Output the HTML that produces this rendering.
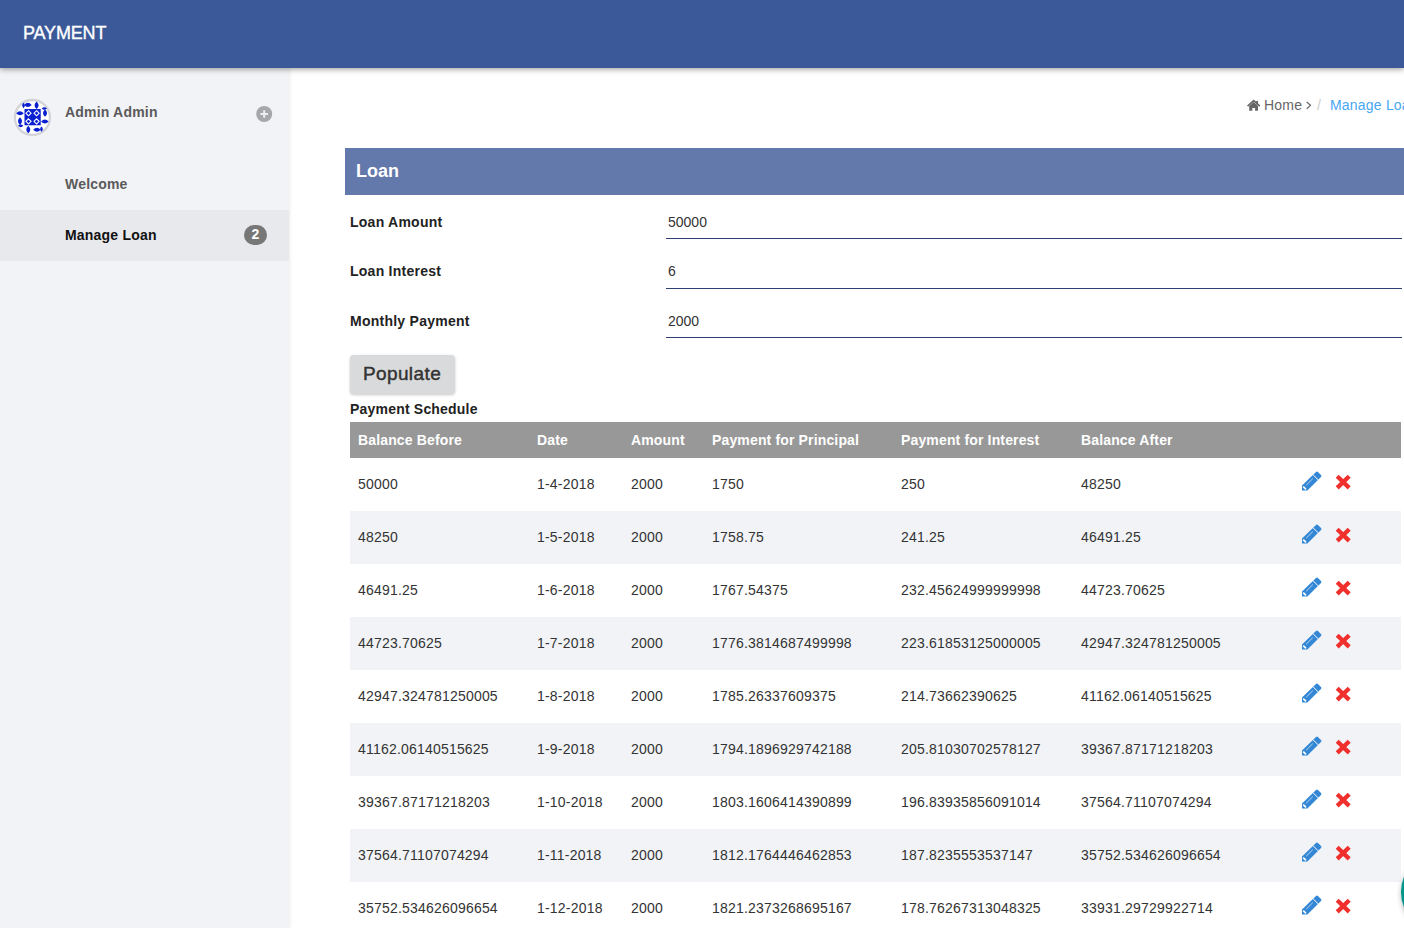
<!DOCTYPE html>
<html><head><meta charset="utf-8">
<style>
*{box-sizing:border-box;margin:0;padding:0}
html,body{width:1404px;height:928px;overflow:hidden;background:#fff;font-family:"Liberation Sans",sans-serif;color:#333}
#top{position:absolute;left:0;top:0;width:1404px;height:68px;background:#3b5998;z-index:5;box-shadow:0 1px 6px rgba(0,0,0,.42)}
#top .brand{position:absolute;left:23px;top:23px;font-size:18px;color:#fff;line-height:20px;letter-spacing:-0.15px;-webkit-text-stroke:0.35px #fff}
#side{position:absolute;left:0;top:68px;width:289px;height:860px;background:#f2f3f7;box-shadow:1px 0 3px rgba(0,0,0,.08)}
.avatar{position:absolute;left:14px;top:31px;width:37px;height:37px;border-radius:50%;background:#fff;border:2px solid #d4d5d8;overflow:hidden}
.uname{position:absolute;left:65px;top:36px;font-size:14px;font-weight:bold;color:#5a5a5a;letter-spacing:0.2px}
.plus{position:absolute;left:256px;top:38px;width:16px;height:16px;border-radius:50%;background:#a8a9ab}
.menu1{position:absolute;left:65px;top:108px;font-size:14px;font-weight:bold;color:#5a5a5a;letter-spacing:0.2px}
.active{position:absolute;left:0;top:142px;width:289px;height:51px;background:#e8e9ed}
.menu2{position:absolute;left:65px;top:159px;font-size:14px;font-weight:bold;color:#111;letter-spacing:0.2px}
.badge{position:absolute;left:244px;top:157px;width:23px;height:20px;border-radius:10px;background:#777;color:#fff;font-size:14px;font-weight:bold;text-align:center;line-height:18px}
.crumb{position:absolute;top:97px;font-size:14px;color:#666;white-space:nowrap;letter-spacing:0.2px}
.crumb .sep{color:#ccc;padding:0 8px 0 4px}
.crumb a{color:#4aa3df}
#panelhead{position:absolute;left:345px;top:148px;width:1059px;height:47px;background:#6378ab}
#panelhead span{position:absolute;left:11px;top:13px;font-size:18px;font-weight:bold;color:#fff;line-height:20px}
.lbl{position:absolute;left:350px;font-size:14px;font-weight:bold;color:#222;letter-spacing:0.25px}
.val{position:absolute;left:668px;font-size:14px;color:#333}
.line{position:absolute;left:666px;width:736px;height:1px;background:#2e4172}
.btn{position:absolute;left:350px;top:355px;width:105px;height:39px;background:#d9dadb;border-radius:4px;box-shadow:0 1px 3px rgba(0,0,0,.22);font-size:19px;font-weight:normal;-webkit-text-stroke:0.45px #333;color:#333;text-align:center;line-height:38px;letter-spacing:0.4px;text-indent:-1px}
.sched{position:absolute;left:350px;top:401px;font-size:14px;font-weight:bold;color:#222;letter-spacing:0.2px}
table{position:absolute;left:350px;top:422px;width:1051px;border-collapse:collapse;font-size:14px}
th{background:#989898;color:#fff;text-align:left;height:36px;padding:0 8px;font-weight:bold;letter-spacing:0.15px}
td{height:53px;padding:0 8px 2px;color:#333;letter-spacing:0.2px}
tr:nth-child(even) td{background:#f2f3f7}
.ic{position:relative}
.pen{position:absolute;left:8px;top:13px;width:21px;height:21px}
.del{position:absolute;left:42px;top:16px;width:17px;height:17px}
.fab{position:absolute;left:1401.1px;top:850px;width:84px;height:84px;border-radius:50%;background:#009688;box-shadow:0 2px 5px rgba(0,0,0,.28)}
</style></head><body>
<div id="top"><div class="brand">PAYMENT</div></div>
<div id="side">
  <svg style="position:absolute;left:0;top:12px;width:80px;height:70px" viewBox="0 0 1061 928"><circle cx="430" cy="497" r="232" fill="#fff" stroke="#d2d3d7" stroke-width="30"/><g fill="#0a1fd0"><rect x="325" y="385" width="215" height="215"/><path d="M320,330 Q370,276 420,330 Q370,384 320,330 Z"/><path d="M485,285 Q539,335 485,385 Q431,335 485,285 Z"/><path d="M597,388 Q651,438 597,488 Q543,438 597,388 Z"/><path d="M545,550 Q595,496 645,550 Q595,604 545,550 Z"/><path d="M440,660 Q490,606 540,660 Q490,714 440,660 Z"/><path d="M375,605 Q429,655 375,705 Q321,655 375,605 Z"/><path d="M265,495 Q319,545 265,595 Q211,545 265,495 Z"/><path d="M215,440 Q265,386 315,440 Q265,494 215,440 Z"/><path d="M312,303 Q348,338 312,373 Q276,338 312,303 Z"/><path d="M553,378 Q588,342 623,378 Q588,414 553,378 Z"/><path d="M550,617 Q586,652 550,687 Q514,652 550,617 Z"/><path d="M240,608 Q275,572 310,608 Q275,644 240,608 Z"/></g><path d="M378,406 L412,440 L378,474 L344,440 Z" fill="none" stroke="#fff" stroke-width="14"/><path d="M485,406 L519,440 L485,474 L451,440 Z" fill="none" stroke="#fff" stroke-width="14"/><path d="M378,514 L412,548 L378,582 L344,548 Z" fill="none" stroke="#fff" stroke-width="14"/><path d="M485,514 L519,548 L485,582 L451,548 Z" fill="none" stroke="#fff" stroke-width="14"/></svg>
  <div class="uname">Admin Admin</div>
  <svg style="position:absolute;left:255px;top:37px;width:18px;height:18px" viewBox="0 0 18 18"><circle cx="9.2" cy="9" r="8" fill="#a6a7a9"/><path d="M5.4,9 H13 M9.2,5.2 V12.8" stroke="#eceef2" stroke-width="2"/></svg>
  <div class="menu1">Welcome</div>
  <div class="active"></div>
  <div class="menu2">Manage Loan</div>
  <div class="badge">2</div>
</div>
<svg style="position:absolute;left:1244px;top:97px;width:20px;height:18px" viewBox="0 0 20 18"><path d="M3.6,9.2 L9.7,3.6 L15.8,9.2" fill="none" stroke="#666" stroke-width="1.6"/><rect x="12.2" y="3.9" width="1.8" height="3.6" fill="#666"/><path d="M5.2,13.8 V9.1 L9.7,5.1 L14,9.1 V13.8 H11.1 V10.9 H8.3 V13.8 Z" fill="#666"/></svg>
<div class="crumb" style="left:1264px">Home</div>
<svg style="position:absolute;left:1300px;top:96px;width:16px;height:18px" viewBox="0 0 16 18"><path d="M6.7,6 L10.5,9.35 L6.7,12.7" fill="none" stroke="#666" stroke-width="1.2"/></svg>
<div class="crumb" style="left:1317px;color:#ccc">/</div>
<div class="crumb" style="left:1330px;color:#48a7f3">Manage Loan</div>
<div id="panelhead"><span>Loan</span></div>
<div class="lbl" style="top:214px">Loan Amount</div>
<div class="val" style="top:214px">50000</div>
<div class="line" style="top:238px"></div>
<div class="lbl" style="top:263px">Loan Interest</div>
<div class="val" style="top:263px">6</div>
<div class="line" style="top:288px"></div>
<div class="lbl" style="top:313px">Monthly Payment</div>
<div class="val" style="top:313px">2000</div>
<div class="line" style="top:337px"></div>
<div class="btn">Populate</div>
<div class="sched">Payment Schedule</div>
<table>
<thead><tr><th style="width:179px">Balance Before</th><th style="width:94px">Date</th><th style="width:81px">Amount</th><th style="width:189px">Payment for Principal</th><th style="width:180px">Payment for Interest</th><th style="width:220px">Balance After</th><th></th></tr></thead>
<tbody>
<tr><td>50000</td><td>1-4-2018</td><td>2000</td><td>1750</td><td>250</td><td>48250</td><td class="ic"><svg class="pen" viewBox="0 0 21 21"><path d="M1,14.4 L15,0.9 Q16,0 17,1 L20,4 Q21,5 20,6 L6.4,19.6 L1,19.6 Z" fill="#3387d5"/><path d="M11.9,3.6 L17.2,8.9" stroke="#fff" stroke-width="1"/><path d="M5.2,14.2 L11.8,7.6" stroke="#c4dcf4" stroke-width="0.9"/><path d="M2.2,15.6 L5,18.4" stroke="#fff" stroke-width="1.6"/></svg><svg class="del" viewBox="0 0 17 17"><path d="M2.2,2.3 L14.2,13.9 M14.2,2.3 L2.2,13.9" stroke="#f0302c" stroke-width="4.3"/></svg></td></tr>
<tr><td>48250</td><td>1-5-2018</td><td>2000</td><td>1758.75</td><td>241.25</td><td>46491.25</td><td class="ic"><svg class="pen" viewBox="0 0 21 21"><path d="M1,14.4 L15,0.9 Q16,0 17,1 L20,4 Q21,5 20,6 L6.4,19.6 L1,19.6 Z" fill="#3387d5"/><path d="M11.9,3.6 L17.2,8.9" stroke="#fff" stroke-width="1"/><path d="M5.2,14.2 L11.8,7.6" stroke="#c4dcf4" stroke-width="0.9"/><path d="M2.2,15.6 L5,18.4" stroke="#fff" stroke-width="1.6"/></svg><svg class="del" viewBox="0 0 17 17"><path d="M2.2,2.3 L14.2,13.9 M14.2,2.3 L2.2,13.9" stroke="#f0302c" stroke-width="4.3"/></svg></td></tr>
<tr><td>46491.25</td><td>1-6-2018</td><td>2000</td><td>1767.54375</td><td>232.45624999999998</td><td>44723.70625</td><td class="ic"><svg class="pen" viewBox="0 0 21 21"><path d="M1,14.4 L15,0.9 Q16,0 17,1 L20,4 Q21,5 20,6 L6.4,19.6 L1,19.6 Z" fill="#3387d5"/><path d="M11.9,3.6 L17.2,8.9" stroke="#fff" stroke-width="1"/><path d="M5.2,14.2 L11.8,7.6" stroke="#c4dcf4" stroke-width="0.9"/><path d="M2.2,15.6 L5,18.4" stroke="#fff" stroke-width="1.6"/></svg><svg class="del" viewBox="0 0 17 17"><path d="M2.2,2.3 L14.2,13.9 M14.2,2.3 L2.2,13.9" stroke="#f0302c" stroke-width="4.3"/></svg></td></tr>
<tr><td>44723.70625</td><td>1-7-2018</td><td>2000</td><td>1776.3814687499998</td><td>223.61853125000005</td><td>42947.324781250005</td><td class="ic"><svg class="pen" viewBox="0 0 21 21"><path d="M1,14.4 L15,0.9 Q16,0 17,1 L20,4 Q21,5 20,6 L6.4,19.6 L1,19.6 Z" fill="#3387d5"/><path d="M11.9,3.6 L17.2,8.9" stroke="#fff" stroke-width="1"/><path d="M5.2,14.2 L11.8,7.6" stroke="#c4dcf4" stroke-width="0.9"/><path d="M2.2,15.6 L5,18.4" stroke="#fff" stroke-width="1.6"/></svg><svg class="del" viewBox="0 0 17 17"><path d="M2.2,2.3 L14.2,13.9 M14.2,2.3 L2.2,13.9" stroke="#f0302c" stroke-width="4.3"/></svg></td></tr>
<tr><td>42947.324781250005</td><td>1-8-2018</td><td>2000</td><td>1785.26337609375</td><td>214.73662390625</td><td>41162.06140515625</td><td class="ic"><svg class="pen" viewBox="0 0 21 21"><path d="M1,14.4 L15,0.9 Q16,0 17,1 L20,4 Q21,5 20,6 L6.4,19.6 L1,19.6 Z" fill="#3387d5"/><path d="M11.9,3.6 L17.2,8.9" stroke="#fff" stroke-width="1"/><path d="M5.2,14.2 L11.8,7.6" stroke="#c4dcf4" stroke-width="0.9"/><path d="M2.2,15.6 L5,18.4" stroke="#fff" stroke-width="1.6"/></svg><svg class="del" viewBox="0 0 17 17"><path d="M2.2,2.3 L14.2,13.9 M14.2,2.3 L2.2,13.9" stroke="#f0302c" stroke-width="4.3"/></svg></td></tr>
<tr><td>41162.06140515625</td><td>1-9-2018</td><td>2000</td><td>1794.1896929742188</td><td>205.81030702578127</td><td>39367.87171218203</td><td class="ic"><svg class="pen" viewBox="0 0 21 21"><path d="M1,14.4 L15,0.9 Q16,0 17,1 L20,4 Q21,5 20,6 L6.4,19.6 L1,19.6 Z" fill="#3387d5"/><path d="M11.9,3.6 L17.2,8.9" stroke="#fff" stroke-width="1"/><path d="M5.2,14.2 L11.8,7.6" stroke="#c4dcf4" stroke-width="0.9"/><path d="M2.2,15.6 L5,18.4" stroke="#fff" stroke-width="1.6"/></svg><svg class="del" viewBox="0 0 17 17"><path d="M2.2,2.3 L14.2,13.9 M14.2,2.3 L2.2,13.9" stroke="#f0302c" stroke-width="4.3"/></svg></td></tr>
<tr><td>39367.87171218203</td><td>1-10-2018</td><td>2000</td><td>1803.1606414390899</td><td>196.83935856091014</td><td>37564.71107074294</td><td class="ic"><svg class="pen" viewBox="0 0 21 21"><path d="M1,14.4 L15,0.9 Q16,0 17,1 L20,4 Q21,5 20,6 L6.4,19.6 L1,19.6 Z" fill="#3387d5"/><path d="M11.9,3.6 L17.2,8.9" stroke="#fff" stroke-width="1"/><path d="M5.2,14.2 L11.8,7.6" stroke="#c4dcf4" stroke-width="0.9"/><path d="M2.2,15.6 L5,18.4" stroke="#fff" stroke-width="1.6"/></svg><svg class="del" viewBox="0 0 17 17"><path d="M2.2,2.3 L14.2,13.9 M14.2,2.3 L2.2,13.9" stroke="#f0302c" stroke-width="4.3"/></svg></td></tr>
<tr><td>37564.71107074294</td><td>1-11-2018</td><td>2000</td><td>1812.1764446462853</td><td>187.8235553537147</td><td>35752.534626096654</td><td class="ic"><svg class="pen" viewBox="0 0 21 21"><path d="M1,14.4 L15,0.9 Q16,0 17,1 L20,4 Q21,5 20,6 L6.4,19.6 L1,19.6 Z" fill="#3387d5"/><path d="M11.9,3.6 L17.2,8.9" stroke="#fff" stroke-width="1"/><path d="M5.2,14.2 L11.8,7.6" stroke="#c4dcf4" stroke-width="0.9"/><path d="M2.2,15.6 L5,18.4" stroke="#fff" stroke-width="1.6"/></svg><svg class="del" viewBox="0 0 17 17"><path d="M2.2,2.3 L14.2,13.9 M14.2,2.3 L2.2,13.9" stroke="#f0302c" stroke-width="4.3"/></svg></td></tr>
<tr><td>35752.534626096654</td><td>1-12-2018</td><td>2000</td><td>1821.2373268695167</td><td>178.76267313048325</td><td>33931.29729922714</td><td class="ic"><svg class="pen" viewBox="0 0 21 21"><path d="M1,14.4 L15,0.9 Q16,0 17,1 L20,4 Q21,5 20,6 L6.4,19.6 L1,19.6 Z" fill="#3387d5"/><path d="M11.9,3.6 L17.2,8.9" stroke="#fff" stroke-width="1"/><path d="M5.2,14.2 L11.8,7.6" stroke="#c4dcf4" stroke-width="0.9"/><path d="M2.2,15.6 L5,18.4" stroke="#fff" stroke-width="1.6"/></svg><svg class="del" viewBox="0 0 17 17"><path d="M2.2,2.3 L14.2,13.9 M14.2,2.3 L2.2,13.9" stroke="#f0302c" stroke-width="4.3"/></svg></td></tr>
</tbody>
</table>
<div class="fab"></div>
</body></html>
